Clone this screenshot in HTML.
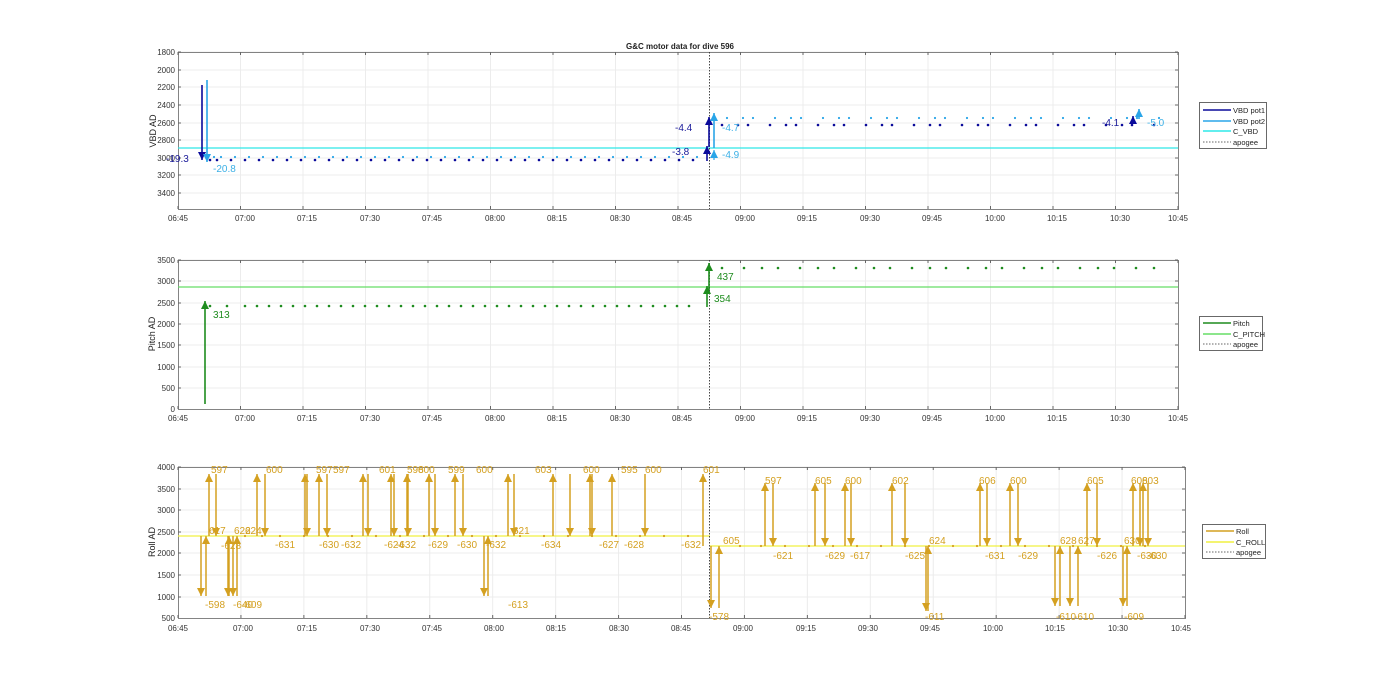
<!DOCTYPE html>
<html><head><meta charset="utf-8"><style>
body{margin:0;background:#fff;width:1400px;height:693px;overflow:hidden}
svg{display:block;font-family:"Liberation Sans",sans-serif}
.t{font-size:8px;fill:#333}
.yl{font-size:9px;fill:#222}
.lg{font-size:7.5px;fill:#222}
</style></head><body>
<svg id="s" width="1400" height="693" xmlns="http://www.w3.org/2000/svg">
<g id="grid"></g>
<g id="data"></g>
<text x="680" y="49" text-anchor="middle" font-size="8" font-weight="bold" fill="#222">G&amp;C motor data for dive 596</text>
<g class="t" text-anchor="end">
<text x="175" y="55">1800</text><text x="175" y="73">2000</text><text x="175" y="90">2200</text><text x="175" y="108">2400</text><text x="175" y="126">2600</text><text x="175" y="143">2800</text><text x="175" y="161">3000</text><text x="175" y="178">3200</text><text x="175" y="196">3400</text>
<text x="175" y="263">3500</text><text x="175" y="284">3000</text><text x="175" y="306">2500</text><text x="175" y="327">2000</text><text x="175" y="348">1500</text><text x="175" y="370">1000</text><text x="175" y="391">500</text><text x="175" y="412">0</text>
<text x="175" y="470">4000</text><text x="175" y="492">3500</text><text x="175" y="513">3000</text><text x="175" y="535">2500</text><text x="175" y="556">2000</text><text x="175" y="578">1500</text><text x="175" y="600">1000</text><text x="175" y="621">500</text>
</g>
<g class="t" text-anchor="middle">
<text x="178" y="221">06:45</text><text x="245" y="221">07:00</text><text x="307" y="221">07:15</text><text x="370" y="221">07:30</text><text x="432" y="221">07:45</text><text x="495" y="221">08:00</text><text x="557" y="221">08:15</text><text x="620" y="221">08:30</text><text x="682" y="221">08:45</text><text x="745" y="221">09:00</text><text x="807" y="221">09:15</text><text x="870" y="221">09:30</text><text x="932" y="221">09:45</text><text x="995" y="221">10:00</text><text x="1057" y="221">10:15</text><text x="1120" y="221">10:30</text><text x="1178" y="221">10:45</text>
<text x="178" y="421">06:45</text><text x="245" y="421">07:00</text><text x="307" y="421">07:15</text><text x="370" y="421">07:30</text><text x="432" y="421">07:45</text><text x="495" y="421">08:00</text><text x="557" y="421">08:15</text><text x="620" y="421">08:30</text><text x="682" y="421">08:45</text><text x="745" y="421">09:00</text><text x="807" y="421">09:15</text><text x="870" y="421">09:30</text><text x="932" y="421">09:45</text><text x="995" y="421">10:00</text><text x="1057" y="421">10:15</text><text x="1120" y="421">10:30</text><text x="1178" y="421">10:45</text>
<text x="178" y="631">06:45</text><text x="243" y="631">07:00</text><text x="307" y="631">07:15</text><text x="370" y="631">07:30</text><text x="432" y="631">07:45</text><text x="494" y="631">08:00</text><text x="556" y="631">08:15</text><text x="619" y="631">08:30</text><text x="681" y="631">08:45</text><text x="743" y="631">09:00</text><text x="806" y="631">09:15</text><text x="868" y="631">09:30</text><text x="930" y="631">09:45</text><text x="993" y="631">10:00</text><text x="1055" y="631">10:15</text><text x="1118" y="631">10:30</text><text x="1181" y="631">10:45</text>
</g>
<text class="yl" transform="translate(156,131) rotate(-90)" text-anchor="middle">VBD AD</text>
<text class="yl" transform="translate(155,334) rotate(-90)" text-anchor="middle">Pitch AD</text>
<text class="yl" transform="translate(155,542) rotate(-90)" text-anchor="middle">Roll AD</text>
<g font-size="10">
<text x="166" y="162" fill="#1a1a9a">-19.3</text>
<text x="213" y="172" fill="#3cb0e6">-20.8</text>
<text x="672" y="155" fill="#1a1a9a">-3.8</text>
<text x="675" y="131" fill="#1a1a9a">-4.4</text>
<text x="722" y="131" fill="#3cb0e6">-4.7</text>
<text x="722" y="158" fill="#3cb0e6">-4.9</text>
<text x="1102" y="126" fill="#1a1a9a">-4.1</text>
<text x="1147" y="126" fill="#3cb0e6">-5.0</text>
<text x="213" y="318" fill="#1e8c1e">313</text>
<text x="714" y="302" fill="#1e8c1e">354</text>
<text x="717" y="280" fill="#1e8c1e">437</text>
</g>
<g font-size="10" fill="#d4a020">
<text x="211" y="473">597</text><text x="266" y="473">600</text><text x="316" y="473">597</text><text x="333" y="473">597</text><text x="379" y="473">601</text><text x="407" y="473">598</text><text x="418" y="473">600</text><text x="448" y="473">599</text><text x="476" y="473">600</text><text x="535" y="473">603</text><text x="583" y="473">600</text><text x="621" y="473">595</text><text x="645" y="473">600</text><text x="703" y="473">601</text><text x="765" y="484">597</text><text x="815" y="484">605</text><text x="845" y="484">600</text><text x="892" y="484">602</text><text x="979" y="484">606</text><text x="1010" y="484">600</text><text x="1087" y="484">605</text><text x="1131" y="484">608</text><text x="1142" y="484">603</text>
<text x="209" y="534">617</text><text x="234" y="534">622</text><text x="245" y="534">624</text><text x="513" y="534">621</text><text x="723" y="544">605</text><text x="929" y="544">624</text><text x="1060" y="544">628</text><text x="1078" y="544">627</text><text x="1124" y="544">630</text>
<text x="221" y="549">-628</text><text x="275" y="548">-631</text><text x="319" y="548">-630</text><text x="341" y="548">-632</text><text x="384" y="548">-624</text><text x="396" y="548">-632</text><text x="428" y="548">-629</text><text x="457" y="548">-630</text><text x="486" y="548">-632</text><text x="541" y="548">-634</text><text x="599" y="548">-627</text><text x="624" y="548">-628</text><text x="681" y="548">-632</text>
<text x="773" y="559">-621</text><text x="825" y="559">-629</text><text x="850" y="559">-617</text><text x="905" y="559">-625</text><text x="985" y="559">-631</text><text x="1018" y="559">-629</text><text x="1097" y="559">-626</text><text x="1137" y="559">-630</text><text x="1147" y="559">-630</text>
<text x="205" y="608">-598</text><text x="233" y="608">-640</text><text x="242" y="608">-609</text><text x="508" y="608">-613</text><text x="709" y="620">-578</text><text x="925" y="620">-611</text><text x="1056" y="620">-610</text><text x="1074" y="620">-610</text><text x="1124" y="620">-609</text>
</g>
<g>
<rect x="1199.5" y="102.5" width="67" height="46" fill="#fff" stroke="#444" stroke-width="0.8"/>
<line x1="1203" y1="110" x2="1231" y2="110" stroke="#0a0a9a" stroke-width="1.5"/><text class="lg" x="1233" y="113">VBD pot1</text>
<line x1="1203" y1="121" x2="1231" y2="121" stroke="#2aa5e8" stroke-width="1.5"/><text class="lg" x="1233" y="124">VBD pot2</text>
<line x1="1203" y1="131" x2="1231" y2="131" stroke="#2ee8e8" stroke-width="1.5"/><text class="lg" x="1233" y="134">C_VBD</text>
<line x1="1203" y1="142" x2="1231" y2="142" stroke="#333" stroke-width="0.8" stroke-dasharray="1.5,1.5"/><text class="lg" x="1233" y="145">apogee</text>
<rect x="1199.5" y="316.5" width="63" height="34" fill="#fff" stroke="#444" stroke-width="0.8"/>
<line x1="1203" y1="323" x2="1231" y2="323" stroke="#1e8c1e" stroke-width="1.5"/><text class="lg" x="1233" y="326">Pitch</text>
<line x1="1203" y1="334" x2="1231" y2="334" stroke="#66dd66" stroke-width="1.5"/><text class="lg" x="1233" y="337">C_PITCH</text>
<line x1="1203" y1="344" x2="1231" y2="344" stroke="#333" stroke-width="0.8" stroke-dasharray="1.5,1.5"/><text class="lg" x="1233" y="347">apogee</text>
<rect x="1202.5" y="524.5" width="63" height="34" fill="#fff" stroke="#444" stroke-width="0.8"/>
<line x1="1206" y1="531" x2="1234" y2="531" stroke="#d4a020" stroke-width="1.5"/><text class="lg" x="1236" y="534">Roll</text>
<line x1="1206" y1="542" x2="1234" y2="542" stroke="#f0f040" stroke-width="1.5"/><text class="lg" x="1236" y="545">C_ROLL</text>
<line x1="1206" y1="552" x2="1234" y2="552" stroke="#333" stroke-width="0.8" stroke-dasharray="1.5,1.5"/><text class="lg" x="1236" y="555">apogee</text>
</g>
</svg>
<script>
var NS="http://www.w3.org/2000/svg",G=document.getElementById('grid'),D=document.getElementById('data');
function el(p,t,a){var e=document.createElementNS(NS,t);for(var k in a)e.setAttribute(k,a[k]);p.appendChild(e);return e;}
function axes(x0,x1,y0,y1,yt){
 var w=x1-x0;
 for(var i=1;i<16;i++){var x=x0+w*i/16;el(G,'line',{x1:x,y1:y0,x2:x,y2:y1,stroke:'#ececec','stroke-width':1});}
 yt.forEach(function(y){el(G,'line',{x1:x0,y1:y,x2:x1,y2:y,stroke:'#ececec','stroke-width':1});});
 el(G,'rect',{x:x0+.5,y:y0+.5,width:w,height:y1-y0,fill:'none',stroke:'#666','stroke-width':.8});
 for(var i=0;i<=16;i++){var x=x0+w*i/16;el(G,'line',{x1:x,y1:y1,x2:x,y2:y1-3,stroke:'#666'});el(G,'line',{x1:x,y1:y0,x2:x,y2:y0+3,stroke:'#666'});}
 yt.forEach(function(y){el(G,'line',{x1:x0,y1:y,x2:x0+3,y2:y,stroke:'#666'});el(G,'line',{x1:x1,y1:y,x2:x1-3,y2:y,stroke:'#666'});});
}
axes(178,1178,52,209,[52,70,87,105,123,140,158,175,193]);
axes(178,1178,260,409,[260,281,303,324,345,367,388]);
axes(178,1185,467,618,[467,489,510,532,553,575,597]);
function hl(x0,x1,y,c){el(D,'line',{x1:x0,y1:y,x2:x1,y2:y,stroke:c,'stroke-width':1.3});}
hl(178,1178,148,'#2ee8e8');hl(178,1178,287,'#66dd66');
hl(178,710,536,'#f0f040');hl(710,1185,546,'#f0f040');
function ap(y0,y1){el(D,'line',{x1:709.5,y1:y0,x2:709.5,y2:y1,stroke:'#333','stroke-width':.9,'stroke-dasharray':'1.5,1.5'});}
ap(52,209);ap(260,409);ap(467,618);
function dots(xs,y,c,r){xs.forEach(function(x){el(D,'circle',{cx:x,cy:y,r:r||1.3,fill:c});});}
function seq(a,b,base,m,k){var r=[],x=a;while(x<b){r.push(x);x+=base+((x*k)%m);}return r;}
var pre=seq(210,700,7,14,7),post=seq(722,1160,10,18,3);
dots(pre,160,'#0a0a9a');dots(pre.map(function(v){return v+4}),157,'#2aa5e8',1.1);
dots(post,125,'#0a0a9a');dots(post.map(function(v){return v+5}),118,'#2aa5e8',1.1);
dots(seq(210,700,11,12,5),306,'#1e8c1e');dots(seq(722,1158,12,14,3),268,'#1e8c1e');
dots(seq(245,700,16,12,5),536,'#d4a020',1.1);dots(seq(740,1160,13,12,7),546,'#d4a020',1.1);
function ar(x,y1,y2,c,w){el(D,'line',{x1:x,y1:y1,x2:x,y2:y2,stroke:c,'stroke-width':w||1.6});var d=y2<y1?1:-1;
 el(D,'polygon',{points:(x-4)+','+(y2+8*d)+' '+(x+4)+','+(y2+8*d)+' '+x+','+y2,fill:c});}
var B='#0a0a9a',L='#2aa5e8';
ar(202,85,160,B);ar(207,80,162,L);ar(707,161,146,B);ar(709,147,117,B);ar(714,148,113,L);ar(714,160,150,L,1.2);ar(1133,124,116,B);ar(1139,119,109,L);
ar(205,404,301,'#1e8c1e');ar(707,307,286,'#1e8c1e');ar(709,290,263,'#1e8c1e');
var R='#d4a020';
[[209,536,474],[257,536,474],[305,536,474],[319,536,474],[363,536,474],[391,536,474],[407,536,474],[429,536,474],[455,536,474],[508,536,474],[553,536,474],[590,536,474],[612,536,474],[703,546,474],[765,546,483],[815,546,483],[845,546,483],[892,546,483],[980,546,483],[1010,546,483],[1087,546,483],[1133,546,483],[1143,546,483],
[216,474,536],[265,474,536],[307,474,536],[327,474,536],[368,474,536],[394,474,536],[408,474,536],[435,474,536],[463,474,536],[514,474,536],[570,474,536],[592,474,536],[645,474,536],[773,483,546],[825,483,546],[851,483,546],[905,483,546],[987,483,546],[1018,483,546],[1097,483,546],[1140,483,546],[1148,483,546],
[201,536,596],[228,536,596],[233,536,596],[484,536,596],[711,546,608],[926,546,611],[1055,546,606],[1070,546,606],[1123,546,606],
[206,596,536],[229,596,536],[237,596,536],[488,596,536],[719,608,546],[928,611,546],[1060,606,546],[1078,606,546],[1127,606,546]
].forEach(function(a){ar(a[0],a[1],a[2],R,1.5);});
</script>
</body></html>
